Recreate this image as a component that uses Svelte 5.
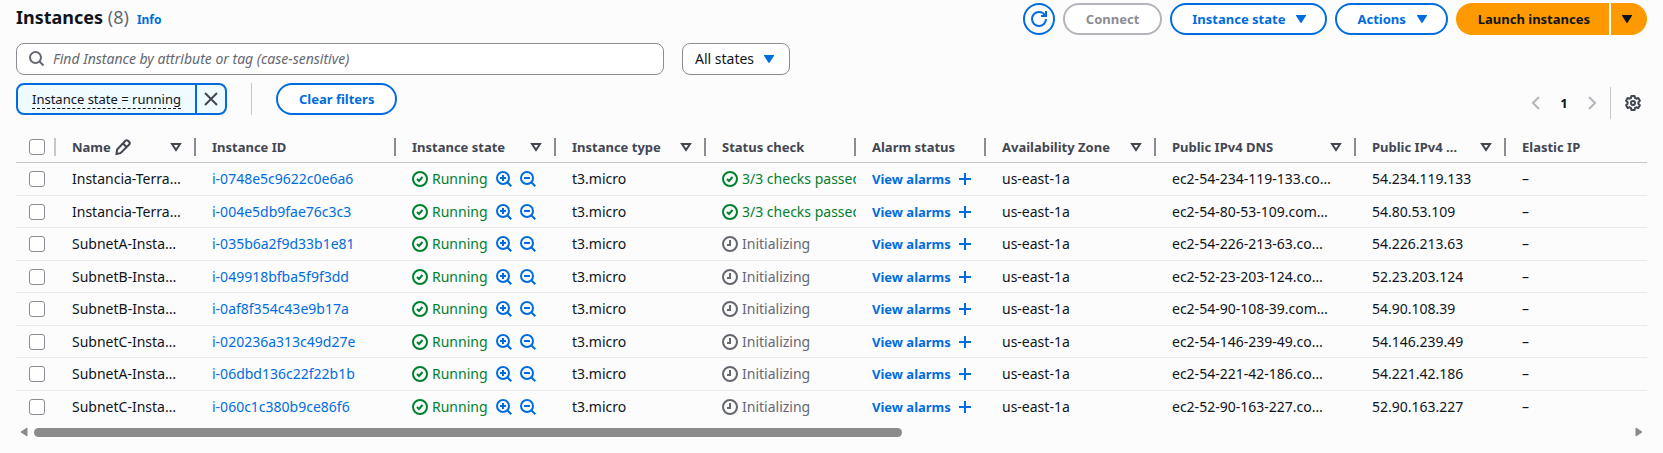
<script>
  const columns = [
    { label: 'Name', width: 140, sort: true, edit: true },
    { label: 'Instance ID', width: 200 },
    { label: 'Instance state', width: 160, sort: true },
    { label: 'Instance type', width: 150, sort: true },
    { label: 'Status check', width: 150 },
    { label: 'Alarm status', width: 130 },
    { label: 'Availability Zone', width: 170, sort: true },
    { label: 'Public IPv4 DNS', width: 200, sort: true },
    { label: 'Public IPv4 …', width: 150, sort: true },
    { label: 'Elastic IP' }
  ];

  const rows = [
    { name: 'Instancia-Terra…', id: 'i-0748e5c9622c0e6a6', ok: true, dns: 'ec2-54-234-119-133.co…', ip: '54.234.119.133' },
    { name: 'Instancia-Terra…', id: 'i-004e5db9fae76c3c3', ok: true, dns: 'ec2-54-80-53-109.com…', ip: '54.80.53.109' },
    { name: 'SubnetA-Insta…', id: 'i-035b6a2f9d33b1e81', ok: false, dns: 'ec2-54-226-213-63.co…', ip: '54.226.213.63' },
    { name: 'SubnetB-Insta…', id: 'i-049918bfba5f9f3dd', ok: false, dns: 'ec2-52-23-203-124.co…', ip: '52.23.203.124' },
    { name: 'SubnetB-Insta…', id: 'i-0af8f354c43e9b17a', ok: false, dns: 'ec2-54-90-108-39.com…', ip: '54.90.108.39' },
    { name: 'SubnetC-Insta…', id: 'i-020236a313c49d27e', ok: false, dns: 'ec2-54-146-239-49.co…', ip: '54.146.239.49' },
    { name: 'SubnetA-Insta…', id: 'i-06dbd136c22f22b1b', ok: false, dns: 'ec2-54-221-42-186.co…', ip: '54.221.42.186' },
    { name: 'SubnetC-Insta…', id: 'i-060c1c380b9ce86f6', ok: false, dns: 'ec2-52-90-163-227.co…', ip: '52.90.163.227' }
  ];
</script>

{#snippet caret()}
  <svg class="icon" viewBox="0 0 16 16" aria-hidden="true"><path class="solid" d="M3.4 4h9.2c.4 0 .6.4.4.8l-4.5 7a.6.6 0 0 1-1 0L3 4.8c-.2-.4 0-.8.4-.8z" /></svg>
{/snippet}

{#snippet check()}
  <svg class="icon" viewBox="0 0 16 16" aria-hidden="true"><circle cx="8" cy="8" r="7" /><path d="m5 8 2 2 3.5-4" /></svg>
{/snippet}

{#snippet clock()}
  <svg class="icon" viewBox="0 0 16 16" aria-hidden="true"><circle cx="8" cy="8" r="7" /><path d="M8 4v5H5" /></svg>
{/snippet}

<main>
  <header>
    <div class="title">
      <h1>Instances <span>(8)</span></h1>
      <a href="#info">Info</a>
    </div>
    <div class="actions">
      <button class="btn round" aria-label="Refresh">
        <svg class="icon" viewBox="0 0 16 16" aria-hidden="true"><path d="M15 8A7 7 0 1 1 8 1c2.8 0 5.2 1.6 6.3 4" /><path d="M10 5h5V0" /></svg>
      </button>
      <button class="btn" disabled>Connect</button>
      <button class="btn drop">Instance state {@render caret()}</button>
      <button class="btn drop">Actions {@render caret()}</button>
      <div class="split">
        <button class="launch">Launch instances</button>
        <button class="more" aria-label="More launch options">{@render caret()}</button>
      </div>
    </div>
  </header>

  <section class="tools">
    <div class="filters">
      <div class="line">
        <label class="search">
          <svg class="icon" viewBox="0 0 16 16" aria-hidden="true"><circle cx="6.5" cy="6.5" r="5.5" /><path d="m10.5 10.5 4 4" /></svg>
          <input type="search" aria-label="Find instance" placeholder="Find Instance by attribute or tag (case-sensitive)" />
        </label>
        <label class="states">
          <select aria-label="State filter"><option>All states</option></select>
          {@render caret()}
        </label>
      </div>
      <div class="line tokens">
        <div class="token">
          <button class="term"><span>Instance state = running</span></button>
          <button class="close" aria-label="Remove filter">
            <svg class="icon" viewBox="0 0 16 16" aria-hidden="true"><path d="m2 2 12 12M14 2 2 14" /></svg>
          </button>
        </div>
        <div class="rule"></div>
        <button class="btn">Clear filters</button>
      </div>
    </div>
    <nav aria-label="Pages">
      <button class="arrow" aria-label="Previous page" disabled>
        <svg class="icon" viewBox="0 0 16 16" aria-hidden="true"><path d="m11 2-6 6 6 6" /></svg>
      </button>
      <button class="page">1</button>
      <button class="arrow" aria-label="Next page" disabled>
        <svg class="icon" viewBox="0 0 16 16" aria-hidden="true"><path d="m5 2 6 6-6 6" /></svg>
      </button>
      <div class="rule"></div>
      <button class="gear" aria-label="Preferences">
        <svg class="icon" viewBox="0 0 16 16" aria-hidden="true"><path d="M6.4 1h3.2l.4 2 1.3.7 2-.7 1.6 2.7-1.5 1.5v1.6l1.5 1.5-1.6 2.7-2-.7-1.3.7-.4 2H6.4L6 13l-1.300-.7-2 .7-1.600-2.700 1.500-1.500V7.200L1.100 5.700 2.700 3l2 .7L6 3z" /><circle cx="8" cy="8" r="2" /></svg>
      </button>
    </nav>
  </section>

  <div class="wrap">
    <table>
      <colgroup>
        <col class="pick" />
        {#each columns as c}
          <col style:width={c.width ? `${c.width}px` : 'auto'} />
        {/each}
      </colgroup>
      <thead>
        <tr>
          <th class="select"><input type="checkbox" aria-label="Select all instances" /></th>
          {#each columns as c}
            <th scope="col">
              <div class="head">
                <span>{c.label}</span>
                {#if c.edit}
                  <svg class="icon" viewBox="0 0 16 16" aria-hidden="true"><path d="M10.5 1.8a1.8 1.8 0 0 1 2.5 0l1.2 1.2a1.8 1.8 0 0 1 0 2.5L5.5 14.2 1.5 15l.6-4.5zM8 4.5 11.5 8" /></svg>
                {/if}
                {#if c.sort}
                  <button class="sort" aria-label="Sort by {c.label}">
                    <svg class="icon" viewBox="0 0 16 16" aria-hidden="true"><path d="M4 5h8l-4 6z" /></svg>
                  </button>
                {/if}
              </div>
            </th>
          {/each}
        </tr>
      </thead>
      <tbody>
        {#each rows as r}
          <tr>
            <td class="select"><input type="checkbox" aria-label="Select {r.id}" /></td>
            <td>{r.name}</td>
            <td><a href="#{r.id}">{r.id}</a></td>
            <td>
              <div class="cell">
                <span class="status good">{@render check()}Running</span>
                <span class="zooms">
                  <button aria-label="Include state in filter">
                    <svg class="icon" viewBox="0 0 16 16" aria-hidden="true"><circle cx="7" cy="7" r="6" /><path d="m11.3 11.3 4 4M4 7h6M7 4v6" /></svg>
                  </button>
                  <button aria-label="Exclude state from filter">
                    <svg class="icon" viewBox="0 0 16 16" aria-hidden="true"><circle cx="7" cy="7" r="6" /><path d="m11.3 11.3 4 4M4 7h6" /></svg>
                  </button>
                </span>
              </div>
            </td>
            <td>t3.micro</td>
            <td>
              {#if r.ok}
                <span class="status good">{@render check()}3/3 checks passed</span>
              {:else}
                <span class="status wait">{@render clock()}Initializing</span>
              {/if}
            </td>
            <td>
              <a class="alarms" href="#alarms">View alarms
                <svg class="icon" viewBox="0 0 16 16" aria-hidden="true"><path d="M8 2v12M2 8h12" /></svg>
              </a>
            </td>
            <td>us-east-1a</td>
            <td>{r.dns}</td>
            <td>{r.ip}</td>
            <td>–</td>
          </tr>
        {/each}
      </tbody>
    </table>
  </div>

  <div class="scroll" aria-hidden="true">
    <svg class="tip" viewBox="0 0 8 10"><path d="M7 1v8L1 5z" /></svg>
    <div class="track"><div class="thumb"></div></div>
    <svg class="tip" viewBox="0 0 8 10"><path d="M1 1v8l6-4z" /></svg>
  </div>
</main>

<style>
  :global(body) {
    margin: 0;
    background: #fcfcfd;
  }
  main {
    padding: 3px 16px 16px;
    font-family: 'Noto Sans', 'Open Sans', sans-serif;
    font-size: 13px;
    line-height: 20px;
    color: #0f141a;
  }
  button, input, select {
    font: inherit;
    color: inherit;
    margin: 0;
  }
  button {
    display: inline-flex;
    align-items: center;
    justify-content: center;
    border: 0;
    padding: 0;
    background: none;
    white-space: nowrap;
    cursor: pointer;
  }
  a {
    color: #006ce0;
    text-decoration: none;
  }
  .icon {
    width: 16px;
    height: 16px;
    flex: none;
    overflow: visible;
    fill: none;
    stroke: currentColor;
    stroke-width: 2;
  }
  .icon .solid {
    fill: currentColor;
    stroke: none;
  }
  header, .title, .actions, .line, nav, .split {
    display: flex;
  }
  header {
    justify-content: space-between;
  }
  .title {
    align-items: baseline;
    gap: 8px;
  }
  h1 {
    margin: 0;
    font-size: 18px;
    line-height: 28px;
    font-weight: 700;
  }
  h1 span {
    font-weight: 400;
    color: #656871;
  }
  .title a {
    font-size: 12px;
    font-weight: 700;
  }
  .actions {
    gap: 8px;
  }
  .btn {
    box-sizing: border-box;
    height: 32px;
    padding: 0 21px;
    gap: 8px;
    border: 2px solid #006ce0;
    border-radius: 16px;
    background: #fff;
    color: #006ce0;
    font-weight: 700;
  }
  .btn:disabled {
    border-color: #b4b4bb;
    color: #8c8c94;
  }
  .drop {
    padding: 0 16px 0 20px;
  }
  .round {
    width: 32px;
    padding: 0;
  }
  .split {
    gap: 2px;
  }
  .split button {
    height: 32px;
    background: #ff9900;
    font-weight: 700;
  }
  .launch {
    padding: 0 19px 0 22px;
    border-radius: 16px 0 0 16px;
  }
  .more {
    width: 36px;
    padding-right: 4px;
    border-radius: 0 16px 16px 0;
  }
  .tools {
    display: flex;
    justify-content: space-between;
    padding-top: 8px;
  }
  .filters {
    flex: 1;
    padding-bottom: 4px;
  }
  .line {
    gap: 18px;
  }
  .search, .states {
    box-sizing: border-box;
    height: 32px;
    display: flex;
    align-items: center;
    border: 1px solid #8c8c94;
    border-radius: 8px;
    background: #fff;
    font-size: 14px;
  }
  .search {
    flex: 0 1 648px;
    gap: 8px;
    padding: 0 12px;
    color: #656871;
  }
  .search input {
    flex: 1;
    min-width: 0;
    padding: 0;
    border: 0;
    outline: 0;
    background: none;
  }
  .search input::placeholder {
    color: #656871;
    font-style: italic;
    opacity: 1;
  }
  .states {
    gap: 6px;
    padding: 0 12px;
  }
  .states select {
    appearance: none;
    border: 0;
    padding: 0;
    background: none;
  }
  .states .icon {
    color: #006ce0;
  }
  .tokens {
    gap: 24px;
    padding-top: 8px;
  }
  .token {
    box-sizing: border-box;
    height: 32px;
    display: flex;
    border: 2px solid #006ce0;
    border-radius: 8px;
    background: #f0fbff;
  }
  .term {
    padding: 0 14px;
  }
  .term span {
    line-height: 18px;
    border-bottom: 1px dashed #0f141a;
  }
  .close {
    width: 30px;
    border-left: 2px solid #006ce0;
    color: #424650;
  }
  .rule {
    width: 1px;
    height: 32px;
    background: #c6c6cd;
  }
  nav {
    align-self: flex-end;
    align-items: center;
    padding-right: 6px;
  }
  nav .arrow {
    width: 16px;
    color: #b4b4bb;
  }
  .page {
    width: 40px;
    font-weight: 700;
  }
  nav .rule {
    margin: 0 14px 0 10px;
  }
  .gear {
    color: #424650;
  }
  .gear .icon {
    stroke-linejoin: round;
  }
  .wrap {
    padding-top: 12px;
    overflow: hidden;
  }
  table {
    width: 100%;
    table-layout: fixed;
    border-collapse: separate;
    border-spacing: 0;
  }
  .pick {
    width: 40px;
  }
  th, td {
    box-sizing: border-box;
    height: 32px;
    padding: 0 0 0 16px;
    text-align: left;
    white-space: nowrap;
    overflow: hidden;
    border-bottom: 1px solid #ebebf0;
  }
  td {
    font-size: 14px;
  }
  tbody tr:nth-child(odd) td {
    height: 33px;
  }
  tbody tr:last-child td {
    border-bottom: 0;
  }
  th {
    border-bottom: 1px solid #c6c6cd;
    color: #424650;
    font-weight: 700;
  }
  .head {
    display: flex;
    align-items: center;
    gap: 4px;
    height: 18px;
    padding-right: 10px;
    border-right: 2px solid #8c8c94;
  }
  th:last-child .head {
    border-right: 0;
  }
  th.select {
    background: linear-gradient(#c6c6cd, #c6c6cd) right center / 2px 18px no-repeat;
  }
  .sort {
    margin-left: auto;
  }
  .select {
    padding-left: 13px;
  }
  .select input {
    appearance: none;
    box-sizing: border-box;
    display: block;
    width: 16px;
    height: 16px;
    border: 1px solid #8c8c94;
    border-radius: 3px;
    background: #fff;
  }
  .cell {
    display: flex;
    gap: 8px;
  }
  .status, .alarms, .zooms {
    display: flex;
    align-items: center;
    gap: 4px;
  }
  .zooms {
    gap: 8px;
    color: #006ce0;
  }
  .good {
    color: #00802f;
  }
  .wait {
    color: #656871;
  }
  .alarms {
    gap: 6px;
    font-size: 13px;
    font-weight: 700;
  }
  .scroll {
    display: flex;
    align-items: center;
    gap: 6px;
    padding: 4px 4px 0;
  }
  .tip {
    width: 8px;
    height: 10px;
    fill: #8b8b8b;
    stroke: #8b8b8b;
    stroke-linejoin: round;
  }
  .track {
    flex: 1;
    padding-right: 16px;
  }
  .thumb {
    width: 55%;
    height: 9px;
    border-radius: 5px;
    background: #8b8b8b;
  }
</style>
